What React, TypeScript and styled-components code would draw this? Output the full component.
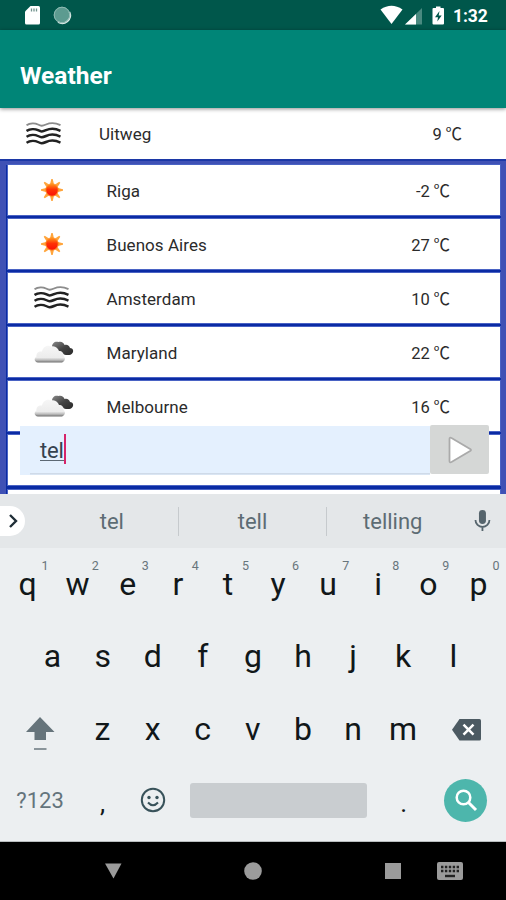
import React from 'react';
import styled, { createGlobalStyle } from 'styled-components';

const GlobalStyle = createGlobalStyle`
  * { box-sizing: border-box; }
  body { margin: 0; font-family: Roboto, "Noto Sans CJK SC", sans-serif; }
`;

const Phone = styled.div`
  width: 506px;
  height: 900px;
  display: flex;
  flex-direction: column;
  overflow: hidden;
  background: #fff;
`;

const StatusBar = styled.header`
  height: 30px;
  flex: none;
  display: flex;
  align-items: center;
  justify-content: space-between;
  padding: 0 18px 0 22px;
  background: #00574b;
  color: #fff;
`;

const StatusGroup = styled.div`
  display: flex;
  align-items: center;
`;

const Clock = styled.span`
  width: 35px;
  font-size: 17.5px;
  font-weight: 700;
  line-height: 30px;
  padding-top: 2px;
  letter-spacing: -0.1px;
`;

const AppBar = styled.div`
  height: 78px;
  flex: none;
  display: flex;
  align-items: center;
  padding: 13px 20px 0;
  background: #008577;
  box-shadow: 0 1px 4px rgba(0, 0, 0, 0.45);
  z-index: 1;
`;

const Title = styled.h1`
  margin: 0;
  color: #fff;
  font-size: 24.5px;
  font-weight: 700;
  line-height: 30px;
`;

const Content = styled.main`
  position: relative;
  height: 386px;
  flex: none;
  overflow: hidden;
`;

const Row = styled.div<{ $current?: boolean }>`
  height: ${(p) => (p.$current ? '50.5px' : '49.6px')};
  display: grid;
  grid-template-columns: 99px 1fr auto;
  align-items: center;
  padding-right: ${(p) => (p.$current ? '44px' : '49.5px')};
  background: #fff;
  color: #2b2b2b;
  font-size: 17px;
  letter-spacing: 0.05px;
`;

const Frame = styled.div`
  height: 336px;
  padding: 6.5px 5px 0 6px;
  background: linear-gradient(#1c38a6 0, #1c38a6 2px, #3f51b5 2.5px);
`;

const Rows = styled.div`
  display: flex;
  flex-direction: column;
  gap: 4.5px;
  padding: 0 1.5px;
  background: #0a2ba4;
`;

const RowShell = styled.div`
  box-shadow: 0 0 0 1px #4a63c4;
`;

const IconCell = styled.div<{ $shift: number }>`
  display: flex;
  padding-left: ${(p) => p.$shift}px;
`;

const PlaceName = styled.span`
  padding-top: 2px;
`;

const Temperature = styled.span`
  font-size: 16.5px;
  letter-spacing: -0.1px;
  white-space: pre;
`;

const SearchBar = styled.div`
  position: absolute;
  left: 20px;
  top: 317px;
  width: 469px;
  height: 50px;
  display: flex;
`;

const Field = styled.div`
  width: 410px;
  height: 49px;
  margin-top: 1px;
  padding: 8px 0 0 20px;
  display: flex;
  align-items: flex-start;
  background: linear-gradient(#cfdae8, #cfdae8) 10px 47px / 400px 1.5px no-repeat, #e4f0fe;
`;

const Typed = styled.span`
  margin-top: 1px;
  height: 26px;
  font-size: 22px;
  line-height: 31px;
  letter-spacing: -0.2px;
  color: #35424f;
  border-bottom: 1.5px solid #5c6873;
`;

const Caret = styled.span`
  width: 2.5px;
  height: 30px;
  background: #d6246a;
`;

const GoButton = styled.button`
  width: 59px;
  height: 49px;
  padding: 0;
  border: 0;
  border-radius: 2px;
  background: #d5d7d6;
  display: flex;
  align-items: center;
  justify-content: center;
`;

const Keyboard = styled.section`
  height: 348px;
  flex: none;
  background: #eceff1;
  border-bottom: 1px solid #b9bdbf;
`;

const Suggestions = styled.div`
  height: 54px;
  display: flex;
  align-items: center;
  background: #e4e7e9;
`;

const Expand = styled.div`
  width: 25px;
  height: 30px;
  border-radius: 0 15px 15px 0;
  background: #fff;
  display: flex;
  align-items: center;
  padding-left: 7px;
`;

const Suggestion = styled.span<{ $width: number; $pad?: number }>`
  width: ${(p) => p.$width}px;
  padding: 1px 0 0 ${(p) => p.$pad ?? 0}px;
  text-align: center;
  font-size: 22px;
  color: #5d6c74;
  line-height: 28px;
`;

const Divider = styled.span`
  width: 1.5px;
  height: 29px;
  background: #c6cacd;
`;

const KeyRow = styled.div<{ $height: number; $inset: number }>`
  height: ${(p) => p.$height}px;
  padding-left: ${(p) => p.$inset}px;
  display: flex;
  align-items: center;
`;

const Key = styled.div<{ $width?: number }>`
  position: relative;
  width: ${(p) => p.$width ?? 50.1}px;
  height: 72px;
  display: flex;
  align-items: center;
  justify-content: center;
  font-size: 32px;
  line-height: 72px;
  color: #111719;
`;

const Hint = styled.sup`
  position: absolute;
  right: 4px;
  top: 10px;
  font-size: 12.5px;
  line-height: 16px;
  color: #68757c;
`;

const ModeLabel = styled.span`
  font-size: 22px;
  color: #64747c;
  padding-top: 2px;
`;

const Mark = styled.span`
  font-size: 26px;
  padding-top: 6px;
`;

const SpaceBar = styled.div`
  width: 177px;
  height: 35px;
  margin: 0 11.5px 0 12.5px;
  border-radius: 3px;
  background: #c9cdd0;
`;

const SearchKey = styled.div`
  width: 43px;
  height: 43px;
  margin-left: 15.5px;
  border-radius: 50%;
  background: #4db6ac;
  display: flex;
  align-items: center;
  justify-content: center;
`;

const ShiftIcon = styled.svg`
  margin-top: 8px;
`;

const NavBar = styled.nav`
  height: 58px;
  flex: none;
  display: flex;
  align-items: center;
  background: #000;
  padding-left: 104px;
`;

const NavIcon = styled.svg<{ $gap: number }>`
  margin-right: ${(p) => p.$gap}px;
  fill: #9b9b9b;
`;

type Weather = 'mist' | 'sun' | 'cloud';

const MistIcon = () => (
  <svg width="35" height="23" viewBox="0 0 35 23" fill="none">
    {[2.5, 8.2, 14, 20].map((y, i) => (
      <path
        key={y}
        d={`M.5 ${y + 0.8}C4 ${y - 1.5} 9 ${y - 1.5} 12 ${y}S16 ${y + 1.8} 20 ${y}S29 ${y - 2} 34.500 ${y + 0.6}`}
        stroke={i === 0 ? '#8c8c8c' : '#222'}
        strokeWidth={i === 0 ? 1.9 : 2.5}
      />
    ))}
  </svg>
);

const SunIcon = () => (
  <svg width="24" height="24" viewBox="-12 -12 24 24">
    <defs>
      <linearGradient id="sun" x1="0" y1="0" x2="0" y2="1">
        <stop offset="0" stopColor="#ff9a1c" />
        <stop offset="0.45" stopColor="#ff3205" />
        <stop offset="1" stopColor="#f91005" />
      </linearGradient>
    </defs>
    {[0, 45, 90, 135, 180, 225, 270, 315].map((a) => (
      <path key={a} d="M-1.9-6L-.7-11H.7L1.900-6Z" fill="#ffa53c" transform={`rotate(${a})`} />
    ))}
    <circle r="6.2" fill="url(#sun)" stroke="#ff8a1e" strokeWidth="0.8" />
  </svg>
);

const CloudIcon = () => (
  <svg width="42" height="26" viewBox="0 0 42 26">
    <defs>
      <linearGradient id="cloud" x1="0" y1="0" x2="0" y2="1">
        <stop offset="0" stopColor="#f6f6f6" />
        <stop offset="0.7" stopColor="#ececec" />
        <stop offset="0.86" stopColor="#bbbbbb" />
        <stop offset="1" stopColor="#6e6e6e" />
      </linearGradient>
      <linearGradient id="darkCloud" x1="0" y1="0" x2="1" y2="1">
        <stop offset="0" stopColor="#8a8a8a" />
        <stop offset="0.5" stopColor="#444" />
        <stop offset="1" stopColor="#282828" />
      </linearGradient>
    </defs>
    <path
      d="M19 8C19 4 22 2 25.500 3C28 2 31 3.500 31.500 6C34 5 36.500 6.500 37 9C40 9 41 12 39.500 14C38 16.500 34 16.500 31 15.500C28 13 23 12 19 8Z"
      fill="url(#darkCloud)"
    />
    <path
      d="M5 23.500C1 23 .8 19 3.500 17.500C3 14 6 12 9 12.500C10 8 14 5.500 18.500 7.500C22 6.500 25 9 26 12C29 12 31 14 30.500 17C33 19 32 22.500 29 23.500Z"
      fill="url(#cloud)"
    />
  </svg>
);

const weatherIcons: Record<Weather, { Icon: React.FC; shift: number }> = {
  mist: { Icon: MistIcon, shift: 26 },
  sun: { Icon: SunIcon, shift: 32.5 },
  cloud: { Icon: CloudIcon, shift: 25.5 },
};

interface Place {
  name: string;
  temp: number;
  weather: Weather;
}

const current: Place = { name: 'Uitweg', temp: 9, weather: 'mist' };

const places: Place[] = [
  { name: 'Riga', temp: -2, weather: 'sun' },
  { name: 'Buenos Aires', temp: 27, weather: 'sun' },
  { name: 'Amsterdam', temp: 10, weather: 'mist' },
  { name: 'Maryland', temp: 22, weather: 'cloud' },
  { name: 'Melbourne', temp: 16, weather: 'cloud' },
];

const PlaceRow = ({ place, isCurrent }: { place: Place; isCurrent?: boolean }) => {
  const { Icon, shift } = weatherIcons[place.weather];
  return (
    <Row $current={isCurrent}>
      <IconCell $shift={shift}>
        <Icon />
      </IconCell>
      <PlaceName>{place.name}</PlaceName>
      <Temperature>{`${place.temp} ℃`}</Temperature>
    </Row>
  );
};

const App = () => (
  <>
    <GlobalStyle />
    <Phone>
      <StatusBar>
        <StatusGroup>
          <svg width="52" height="30" viewBox="22 0 52 30">
            <path d="M30.500 6H38.500Q40 6 40 7.500V23Q40 24.500 38.500 24.500H26.500Q25 24.500 25 23V11.500Z" fill="#fff" />
            <path d="M31.500 8.500V11.500M34 8.500V11.500M36.500 8.500V11.500" stroke="#71938d" strokeWidth="1.300" />
            <circle cx="62" cy="15" r="8.300" fill="#5c9b90" />
            <path d="M69.500 12A8 8 0 0 1 58 22" fill="none" stroke="#dceae7" strokeWidth="1.800" />
            <circle cx="62" cy="15" r="7.800" fill="none" stroke="#8dbab2" strokeWidth="1" />
          </svg>
        </StatusGroup>
        <StatusGroup>
          <svg width="73" height="30" viewBox="380 0 73 30">
            <path d="M380.500 9.500Q391.500 2 402.500 9.500L391.500 24Z" fill="#fff" />
            <path d="M422 8V24.500H405Z" fill="#4a8a80" />
            <path d="M416 14V24.500H405Z" fill="#fff" />
            <path d="M436 6.500H440.500V8H443Q444 8 444 9V23.500Q444 24.500 443 24.500H433.500Q432.500 24.500 432.500 23.500V9Q432.500 8 433.500 8H436Z" fill="#fff" />
            <path d="M439.500 11L435 17.200H438L437.300 21.500L441.700 15.500H438.700Z" fill="#00574b" />
          </svg>
          <Clock>1:32</Clock>
        </StatusGroup>
      </StatusBar>
      <AppBar>
        <Title>Weather</Title>
      </AppBar>
      <Content>
        <PlaceRow place={current} isCurrent />
        <Frame>
          <Rows>
            {places.map((place) => (
              <RowShell key={place.name}>
                <PlaceRow place={place} />
              </RowShell>
            ))}
            <RowShell>
              <Row />
            </RowShell>
            <RowShell>
              <Row />
            </RowShell>
          </Rows>
        </Frame>
        <SearchBar>
          <Field>
            <Typed>tel</Typed>
            <Caret />
          </Field>
          <GoButton aria-label="Search">
            <svg width="28" height="30" viewBox="0 0 28 30">
              <path d="M3.500 4Q3.500 2 5.500 3L24.500 14.200Q25.500 15 24.500 15.800L5.500 27Q3.500 28 3.500 26Z" fill="#fff" stroke="#aaa" strokeWidth="1.800" />
            </svg>
          </GoButton>
        </SearchBar>
      </Content>
      <Keyboard>
        <Suggestions>
          <Expand>
            <svg width="14" height="16" viewBox="0 0 14 16">
              <path d="M3 2L9 8L3 14" fill="none" stroke="#1f2d36" strokeWidth="2.400" />
            </svg>
          </Expand>
          <Suggestion $width={153} $pad={21}>tel</Suggestion>
          <Divider />
          <Suggestion $width={147}>tell</Suggestion>
          <Divider />
          <Suggestion $width={131}>telling</Suggestion>
          <svg width="48" height="30" viewBox="458 506 48 30">
            <rect x="479" y="510" width="7" height="14" rx="3.500" fill="#56656d" />
            <path d="M475.500 520A7 7 0 0 0 489.500 520M482.500 527V531" fill="none" stroke="#56656d" strokeWidth="1.800" />
          </svg>
        </Suggestions>
        <KeyRow $height={72} $inset={2.5}>
          {'qwertyuiop'.split('').map((k, i) => (
            <Key key={k}>
              {k}
              <Hint>{(i + 1) % 10}</Hint>
            </Key>
          ))}
        </KeyRow>
        <KeyRow $height={72} $inset={27.5}>
          {'asdfghjkl'.split('').map((k) => (
            <Key key={k}>{k}</Key>
          ))}
        </KeyRow>
        <KeyRow $height={73} $inset={2.5}>
          <Key $width={75}>
            <ShiftIcon width="30" height="36" viewBox="25 716 30 36">
              <path d="M40 718L54.500 733H46V741H34.500V733H26Z" fill="#66747b" />
              <path d="M34 750H46.500" stroke="#8a959b" strokeWidth="2" />
            </ShiftIcon>
          </Key>
          {'zxcvbnm'.split('').map((k) => (
            <Key key={k}>{k}</Key>
          ))}
          <Key $width={77}>
            <svg width="30" height="24" viewBox="452 717 30 24">
              <path d="M459.500 719H479.500Q481 719 481 720.500V739Q481 740.500 479.500 740.500H459.500L452 729.700Z" fill="#4c5a62" />
              <path d="M463.500 724.700L473.500 734.700M473.500 724.700L463.500 734.700" stroke="#fff" strokeWidth="2.500" />
            </svg>
          </Key>
        </KeyRow>
        <KeyRow $height={70} $inset={2.5}>
          <Key $width={75}>
            <ModeLabel>?123</ModeLabel>
          </Key>
          <Key>
            <Mark>,</Mark>
          </Key>
          <Key>
            <svg width="26" height="26" viewBox="0 0 26 26">
              <circle cx="13" cy="13" r="11.200" fill="none" stroke="#38525a" strokeWidth="2" />
              <circle cx="9" cy="10.500" r="1.700" fill="#38525a" />
              <circle cx="17" cy="10.500" r="1.700" fill="#38525a" />
              <path d="M8 15.500Q13 21 18 15.500" fill="none" stroke="#38525a" strokeWidth="2" />
            </svg>
          </Key>
          <SpaceBar />
          <Key>
            <Mark>.</Mark>
          </Key>
          <SearchKey>
            <svg width="24" height="24" viewBox="0 0 24 24" fill="none" stroke="#fff">
              <circle cx="9.500" cy="9.500" r="6.800" strokeWidth="2.500" />
              <path d="M14.500 14.500L22 22" strokeWidth="3" />
            </svg>
          </SearchKey>
        </KeyRow>
      </Keyboard>
      <NavBar>
        <NavIcon $gap={122} width="18" height="16" viewBox="0 0 18 16">
          <path d="M1 .5H17.500L9.500 15.500Z" />
        </NavIcon>
        <NavIcon $gap={123} width="18" height="18" viewBox="0 0 18 18">
          <circle cx="9" cy="9" r="8.800" />
        </NavIcon>
        <NavIcon $gap={36} width="16" height="16" viewBox="0 0 16 16">
          <rect width="16" height="16" />
        </NavIcon>
        <NavIcon $gap={0} width="26" height="18" viewBox="0 0 26 18">
          <rect width="26" height="18" rx="2" />
          <path d="M4 5H22M4 9H22" stroke="#222" strokeWidth="2.400" strokeDasharray="2.400 1.500" />
          <path d="M8 14H18" stroke="#222" strokeWidth="2.400" />
        </NavIcon>
      </NavBar>
    </Phone>
  </>
);

export default App;
